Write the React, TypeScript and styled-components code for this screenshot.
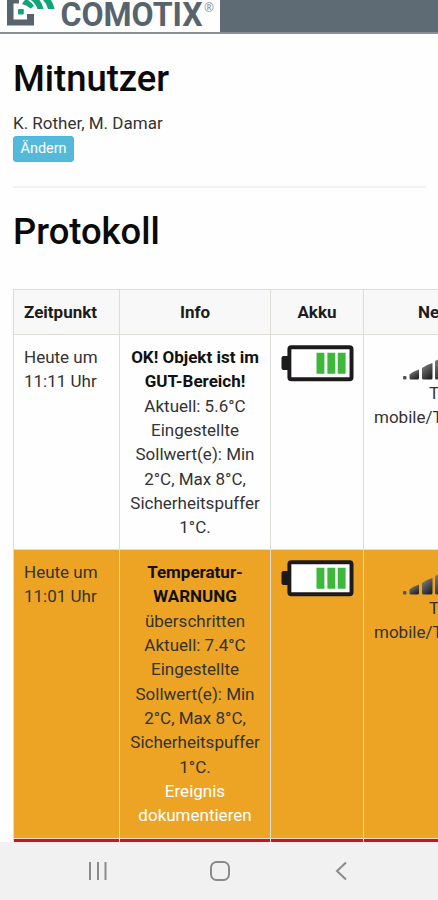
import React from "react";
import styled, { createGlobalStyle, css } from "styled-components";

const GlobalStyle = createGlobalStyle`
  * { box-sizing: border-box; }
  html, body { margin: 0; padding: 0; overflow: hidden; background: #fefefe; }
`;

const Screen = styled.div`
  width: 438px;
  height: 900px;
  overflow: hidden;
  display: flex;
  flex-direction: column;
  background: #fefefe;
  color: #333;
  font-family: Roboto, "Liberation Sans", sans-serif;
  font-size: 17px;
  line-height: 24.35px;
`;

const TopBar = styled.header`
  flex: none;
  height: 34px;
  background: #5e6b75;
  border-bottom: 2px solid #8b8f98;
`;

const Brand = styled.div`
  width: 220px;
  height: 32px;
  background: #fefefe;
  svg { display: block; }
`;

const Content = styled.main`
  flex: 1;
  min-height: 0;
  overflow: hidden;
  padding-left: 13px;
`;

const Title = styled.h1<{ $gap: number }>`
  margin: ${(p) => p.$gap}px 0 0;
  color: #0a0a0a;
  font-size: 36.4px;
  font-weight: 500;
  line-height: 44px;
`;

const Users = styled.p`
  margin: 10px 0 0;
  height: 25px;
`;

const EditButton = styled.button`
  display: block;
  width: 61px;
  height: 26px;
  padding: 0;
  border: 1px solid #46b8da;
  border-radius: 3px;
  background: #55bad9;
  color: #fff;
  font: 400 14.4px/22px Roboto, sans-serif;
`;

const Divider = styled.hr`
  margin: 24px 12px 0 0;
  border: 0;
  border-top: 2px solid #f3f3f3;
`;

const LogTable = styled.div`
  width: 520px;
  margin-top: 35px;
  border-left: 1px solid #dcdcdc;
  border-top: 1px solid #dcdcdc;
`;

const Row = styled.div<{ $tone: "head" | "ok" | "warn" | "alarm"; $height: number }>`
  display: grid;
  grid-template-columns: 106px 151px 93px 1fr;
  height: ${(p) => p.$height}px;
  background: ${(p) => ({ head: "#f8f8f8", ok: "#fefefe", warn: "#eda424", alarm: "#c9151b" })[p.$tone]};
  ${(p) => p.$tone === "head" && css`color: #1c1c1c; font-weight: 700;`}
`;

const Cell = styled.div<{ $align?: "left" | "center"; $indent?: number }>`
  padding: 10px 9px 0 ${(p) => p.$indent ?? 9}px;
  text-align: ${(p) => p.$align ?? "center"};
  white-space: nowrap;
  border-right: 1px solid #dfdcd8;
  border-bottom: 1px solid #dfdcd8;
  strong { color: #111; font-weight: 700; }
`;

const Line = styled.div``;

const EventLink = styled.a`
  display: block;
  color: #fff;
`;

const BatteryBox = styled.div`
  display: flex;
  margin: -1px 0 0 1px;
`;

const Network = styled.div`
  display: grid;
  grid-template-rows: 37px 24.35px 24.35px;
  text-align: left;
  margin-top: -1px;
  svg { display: block; margin: 2px 0 0 29px; }
`;

const Carrier = styled.span`
  padding-left: 55px;
`;

const NavBar = styled.nav`
  flex: none;
  height: 58px;
  display: grid;
  grid-template-columns: 1fr 1fr 1fr;
  justify-items: center;
  align-items: center;
  padding: 0 36px;
  background: #f1f1f1;
  svg { margin-left: 2px; }
`;

const Logo = () => (
  <svg width="220" height="32" viewBox="0 0 220 32">
    <path d="M7 0V25.500H34V14H27V19.500H13.500V3.500H19V0Z" fill="#57636d" />
    <rect x="18" y="9" width="5.8" height="5.5" rx="1" fill="#10a47b" />
    <path d="M25 0Q23.500 1.500 22 4Q27 5 30.500 8.500L34 6Q31 2 28 0ZM31 0Q36 4 37.500 9H43.500Q42.500 4 39.500 0ZM43 0Q47 4 48 9H54.500Q53.500 4 51 0Z" fill="#10a47b" />
    <text x="60.500" y="26.200" textLength="142" lengthAdjust="spacingAndGlyphs" fontFamily="Roboto, sans-serif" fontSize="32.500" fontWeight="700" fill="#57636d">COMOTIX</text>
    <text x="204" y="11.500" fontFamily="Open Sans, sans-serif" fontSize="12" fill="#858c93">®</text>
  </svg>
);

const Battery = () => (
  <BatteryBox>
    <svg width="74" height="38" viewBox="0 0 74 38">
      <rect x="0.5" y="12" width="9" height="14" rx="2" fill="#1c1a1d" />
      <rect x="8.5" y="3" width="63" height="32.5" rx="2" fill="#fff" stroke="#1c1a1d" strokeWidth="4" />
      <path d="M36 8.5h8v21.5h-8zM47 8.5h8v21.5h-8zM57.5 8.5h8v21.5h-8z" fill="#3db83b" />
    </svg>
  </BatteryBox>
);

const Signal = ({ id }: { id: string }) => (
  <Network>
    <svg width="60" height="34" viewBox="0 0 60 34">
      <defs>
        <linearGradient id={id} x1="0" y1="0" x2="0.6" y2="1">
          <stop offset="0" stopColor="#8a8a8a" />
          <stop offset="1" stopColor="#252525" />
        </linearGradient>
      </defs>
      <rect x="0" y="30" width="3.5" height="3.5" rx="1" fill="#555" />
      <path d="M6.500 28.500Q11 25 16 23.500V32Q16 33.500 14.500 33.500H8Q6.500 33.500 6.500 32Z" fill={`url(#${id})`} />
      <path d="M19 22Q24 18.500 29.500 17V32Q29.500 33.500 28 33.500H20.500Q19 33.500 19 32Z" fill={`url(#${id})`} />
      <path d="M32 15Q37 12 43 10.500V33.500H33.500Q32 33.500 32 32Z" fill={`url(#${id})`} />
    </svg>
    <Carrier>T</Carrier>
    <span>mobile/T</span>
  </Network>
);

type Entry = {
  tone: "ok" | "warn";
  height: number;
  time: string[];
  status: string[];
  details: string[];
  link?: string[];
};

const settings = ["Eingestellte", "Sollwert(e): Min", "2°C, Max 8°C,", "Sicherheitspuffer", "1°C."];

const entries: Entry[] = [
  {
    tone: "ok",
    height: 215,
    time: ["Heute um", "11:11 Uhr"],
    status: ["OK! Objekt ist im", "GUT-Bereich!"],
    details: ["Aktuell: 5.6°C", ...settings],
  },
  {
    tone: "warn",
    height: 289,
    time: ["Heute um", "11:01 Uhr"],
    status: ["Temperatur-", "WARNUNG"],
    details: ["überschritten", "Aktuell: 7.4°C", ...settings],
    link: ["Ereignis", "dokumentieren"],
  },
];

const LogRow = ({ entry }: { entry: Entry }) => (
  <Row $tone={entry.tone} $height={entry.height}>
    <Cell $align="left" $indent={10}>
      {entry.time.map((t) => <Line key={t}>{t}</Line>)}
    </Cell>
    <Cell>
      {entry.status.map((t) => <Line key={t}><strong>{t}</strong></Line>)}
      {entry.details.map((t) => <Line key={t}>{t}</Line>)}
      {entry.link && <EventLink>{entry.link[0]}<br />{entry.link[1]}</EventLink>}
    </Cell>
    <Cell><Battery /></Cell>
    <Cell $align="left" $indent={10}><Signal id={`signal-${entry.tone}`} /></Cell>
  </Row>
);

export default function App() {
  return (
    <Screen>
      <GlobalStyle />
      <TopBar>
        <Brand><Logo /></Brand>
      </TopBar>
      <Content>
        <Title $gap={23}>Mitnutzer</Title>
        <Users>K. Rother, M. Damar</Users>
        <EditButton>Ändern</EditButton>
        <Divider />
        <Title $gap={22}>Protokoll</Title>
        <LogTable>
          <Row $tone="head" $height={45}>
            <Cell $align="left" $indent={10}>Zeitpunkt</Cell>
            <Cell>Info</Cell>
            <Cell>Akku</Cell>
            <Cell $align="left" $indent={54}>Ne</Cell>
          </Row>
          {entries.map((e) => <LogRow key={e.tone} entry={e} />)}
          <Row $tone="alarm" $height={60}>
            <Cell /><Cell /><Cell /><Cell />
          </Row>
        </LogTable>
      </Content>
      <NavBar>
        <svg width="20" height="20" viewBox="0 0 20 20" stroke="#8b8b8b" strokeWidth="2">
          <path d="M2 1v18M10 1v18M17.500 1v18" />
        </svg>
        <svg width="22" height="22" viewBox="0 0 22 22" fill="none" stroke="#8b8b8b" strokeWidth="2">
          <rect x="2" y="2" width="18" height="18" rx="5.500" />
        </svg>
        <svg width="20" height="20" viewBox="0 0 20 20" fill="none" stroke="#8b8b8b" strokeWidth="2">
          <path d="M14 1.500L5 10l9 8.500" />
        </svg>
      </NavBar>
    </Screen>
  );
}
